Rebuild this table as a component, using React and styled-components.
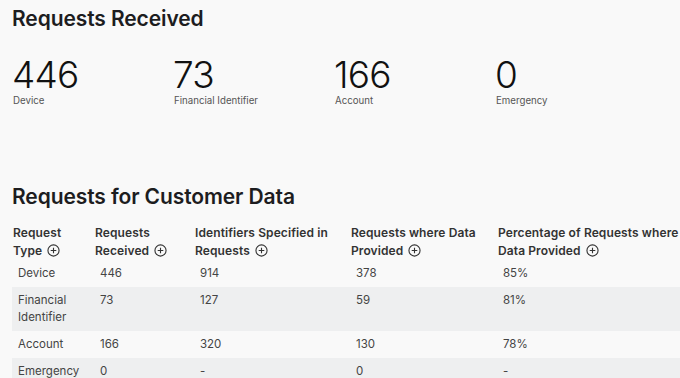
import React from 'react';
import styled, { createGlobalStyle } from 'styled-components';

const GlobalStyle = createGlobalStyle`
  html, body {
    margin: 0;
    padding: 0;
    background: #f9f9f9;
    font-family: Inter, "Noto Sans", "Liberation Sans", sans-serif;
    color: #1d1d1f;
    overflow: hidden;
  }
`;

const Page = styled.div`
  padding: 5px 0 0 12px;
  width: 668px;
  height: 373px;
  overflow: hidden;
`;

const Heading = styled.h2`
  margin: 0;
  font-size: 21px;
  line-height: 28px;
  font-weight: 600;
  letter-spacing: -0.1px;
  color: #1d1d1f;
`;

const StatsRow = styled.div`
  display: flex;
  margin-top: 22px;
  margin-bottom: 76px;
`;

const Stat = styled.div`
  width: 161px;
  display: flex;
  flex-direction: column;
`;

const StatValue = styled.div`
  font-size: 37px;
  line-height: 40px;
  font-weight: 300;
  letter-spacing: -0.8px;
  color: #111;
`;

const StatLabel = styled.div`
  font-size: 9.7px;
  line-height: 12px;
  color: #555;
  margin-left: 1px;
`;

const Table = styled.table`
  margin-top: 13px;
  border-collapse: collapse;
  table-layout: fixed;
  width: 851px;
`;

const HeadCell = styled.th`
  width: ${(p) => p.$w}px;
  text-align: left;
  vertical-align: bottom;
  padding: 0 0 0 1px;
  font-size: 12px;
  line-height: 18px;
  font-weight: 600;
  color: #333;
  letter-spacing: 0.1px;
`;

const Row = styled.tr`
  background: ${(p) => (p.$striped ? '#eeeff0' : 'transparent')};
`;

const Cell = styled.td`
  padding: 5px 6px;
  vertical-align: top;
  font-size: 11.5px;
  line-height: 17px;
  color: #444;
`;

const NoWrap = styled.span`
  white-space: nowrap;
`;

const PlusIcon = styled.svg`
  width: 13px;
  height: 13px;
  margin-left: 5px;
  vertical-align: -2px;
`;

const Plus = () => (
  <PlusIcon viewBox="0 0 14 14">
    <circle cx="7" cy="7" r="6" fill="none" stroke="#333" strokeWidth="1.2" />
    <path d="M7 4v6M4 7h6" stroke="#333" strokeWidth="1.2" fill="none" />
  </PlusIcon>
);

const stats = [
  { value: '446', label: 'Device' },
  { value: '73', label: 'Financial Identifier' },
  { value: '166', label: 'Account' },
  { value: '0', label: 'Emergency' },
];

const columns = [
  { first: 'Request', last: 'Type', width: 81 },
  { first: 'Requests', last: 'Received', width: 99 },
  { first: 'Identifiers Specified in', last: 'Requests', width: 155 },
  { first: 'Requests where Data', last: 'Provided', width: 146 },
  { first: 'Percentage of Requests where', last: 'Data Provided', width: 370 },
];

const rows = [
  ['Device', '446', '914', '378', '85%'],
  ['Financial Identifier', '73', '127', '59', '81%'],
  ['Account', '166', '320', '130', '78%'],
  ['Emergency', '0', '-', '0', '-'],
];

export default function App() {
  return (
    <Page>
      <GlobalStyle />
      <Heading>Requests Received</Heading>
      <StatsRow>
        {stats.map((s) => (
          <Stat key={s.label}>
            <StatValue>{s.value}</StatValue>
            <StatLabel>{s.label}</StatLabel>
          </Stat>
        ))}
      </StatsRow>
      <Heading>Requests for Customer Data</Heading>
      <Table>
        <thead>
          <tr>
            {columns.map((c) => (
              <HeadCell key={c.first} $w={c.width}>
                {c.first}
                <br />
                <NoWrap>
                  {c.last}
                  <Plus />
                </NoWrap>
              </HeadCell>
            ))}
          </tr>
        </thead>
        <tbody>
          {rows.map((r, i) => (
            <Row key={r[0]} $striped={i % 2 === 1}>
              {r.map((v, j) => (
                <Cell key={j}>{v}</Cell>
              ))}
            </Row>
          ))}
        </tbody>
      </Table>
    </Page>
  );
}
